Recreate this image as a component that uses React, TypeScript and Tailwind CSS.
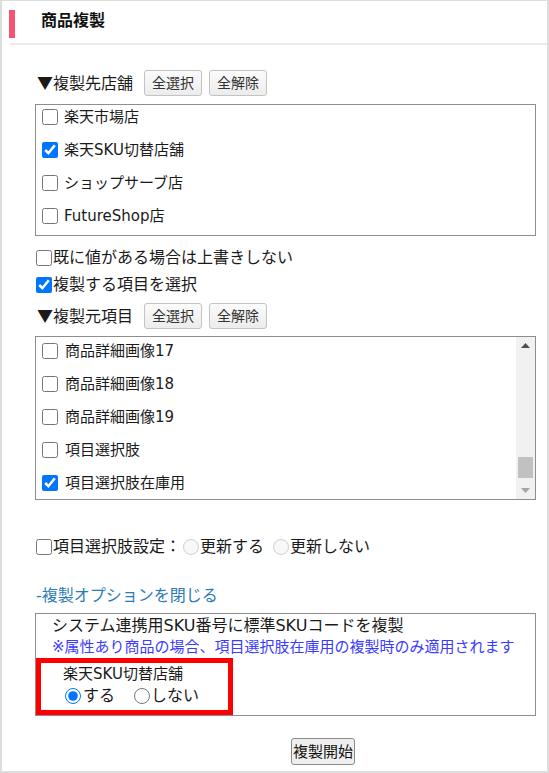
import React from "react";

function SmallButton({ label }: { label: string }) {
  return (
    <button
      type="button"
      className="w-[58px] h-[26px] flex items-center justify-center rounded-[3px] border border-[#c3c3c3] bg-gradient-to-b from-[#fbfbfb] to-[#ececec] text-[14px] leading-[20px] text-[#333]"
    >
      {label}
    </button>
  );
}

function ListRow({ label, checked, gap }: { label: string; checked?: boolean; gap: "a" | "b" }) {
  return (
    <div className={gap === "a" ? "h-[24px] flex items-center gap-[6px]" : "h-[24px] flex items-center gap-[7px]"}>
      <input type="checkbox" defaultChecked={checked} className="w-4 h-4 m-0 shrink-0" />
      <span className="text-[15px] leading-[24px] text-[#1a1a1a]">{label}</span>
    </div>
  );
}

export default function App() {
  return (
    <div className="w-[549px] h-[773px] bg-white border-t border-l-2 border-r-2 border-b-2 border-[#dddddd] font-['DejaVu_Sans','Noto_Sans_CJK_JP',sans-serif] text-[#1a1a1a] overflow-hidden">
      {/* header */}
      <div className="pt-[9px] pl-[7px] flex items-start">
        <div className="w-[6px] h-[28px] bg-[#f5536f]" />
        <div className="ml-[26px] text-[16px] font-bold leading-[22px] text-[#111]">商品複製</div>
      </div>
      <div className="mt-[5px] ml-[8px] h-[2px] bg-[#ebebeb]" />

      <div className="pl-[33px] pr-[11px]">
        {/* 複製先店舗 */}
        <div className="mt-[25px] h-[26px] flex items-center">
          <span className="ml-[2px] text-[16px] leading-[26px]">
            <span className="font-['Noto_Sans_CJK_JP',sans-serif]">▼</span>複製先店舗
          </span>
          <div className="ml-[11px] flex gap-[7px]">
            <SmallButton label="全選択" />
            <SmallButton label="全解除" />
          </div>
        </div>
        <div className="mt-[8px] h-[132px] border border-[#8e8e8e] pl-[6px] flex flex-col gap-[9px]">
          <ListRow gap="a" label="楽天市場店" />
          <ListRow gap="a" label="楽天SKU切替店舗" checked />
          <ListRow gap="a" label="ショップサーブ店" />
          <ListRow gap="a" label="FutureShop店" />
        </div>

        {/* checkboxes */}
        <div className="mt-[8px] h-[27px] flex items-center">
          <input type="checkbox" className="ml-[1px] w-4 h-4 m-0 shrink-0" />
          <span className="ml-[1px] text-[16px] leading-[27px]">既に値がある場合は上書きしない</span>
        </div>
        <div className="h-[27px] flex items-center">
          <input type="checkbox" defaultChecked className="ml-[1px] w-4 h-4 m-0 shrink-0" />
          <span className="ml-[1px] text-[16px] leading-[27px]">複製する項目を選択</span>
        </div>

        {/* 複製元項目 */}
        <div className="mt-[5px] h-[26px] flex items-center">
          <span className="ml-[2px] text-[16px] leading-[26px]">
            <span className="font-['Noto_Sans_CJK_JP',sans-serif]">▼</span>複製元項目
          </span>
          <div className="ml-[11px] flex gap-[7px]">
            <SmallButton label="全選択" />
            <SmallButton label="全解除" />
          </div>
        </div>
        <div className="mt-[7px] h-[164px] border border-[#8e8e8e] flex">
          <div className="flex-1 pt-[2px] pl-[6px] flex flex-col gap-[9px] overflow-hidden">
            <ListRow gap="b" label="商品詳細画像17" />
            <ListRow gap="b" label="商品詳細画像18" />
            <ListRow gap="b" label="商品詳細画像19" />
            <ListRow gap="b" label="項目選択肢" />
            <ListRow gap="b" label="項目選択肢在庫用" checked />
          </div>
          <div className="w-[19px] bg-[#f1f1f1] flex flex-col">
            <div className="h-[17px] flex items-center justify-center">
              <svg width="9" height="5" viewBox="0 0 9 5">
                <path d="M0 5 L4.5 0 L9 5 Z" fill="#505050" />
              </svg>
            </div>
            <div className="h-[103px]" />
            <div className="h-[21px] mx-[2px] bg-[#c1c1c1]" />
            <div className="flex-1" />
            <div className="h-[17px] flex items-center justify-center">
              <svg width="9" height="5" viewBox="0 0 9 5">
                <path d="M0 0 L9 0 L4.5 5 Z" fill="#a3a3a3" />
              </svg>
            </div>
          </div>
        </div>

        {/* 項目選択肢設定 */}
        <div className="mt-[33px] h-[27px] flex items-center">
          <input type="checkbox" className="ml-[1px] w-4 h-4 m-0 shrink-0" />
          <span className="ml-[1px] text-[16px] leading-[27px]">項目選択肢設定：</span>
          <input type="radio" name="upd" disabled className="ml-[2px] w-4 h-4 m-0 shrink-0" />
          <span className="ml-[1px] text-[16px] leading-[27px]">更新する</span>
          <input type="radio" name="upd" disabled className="ml-[9px] w-4 h-4 m-0 shrink-0" />
          <span className="ml-[1px] text-[16px] leading-[27px]">更新しない</span>
        </div>

        {/* link */}
        <div className="mt-[24px] ml-[1px] text-[16px] leading-[24px] text-[#2a7ab8]">-複製オプションを閉じる</div>

        {/* options box */}
        <div className="mt-[5px] h-[103px] border border-[#8e8e8e]">
          <div className="pt-[1px] pl-[16px] text-[16px] leading-[22px]">システム連携用SKU番号に標準SKUコードを複製</div>
          <div className="pl-[16px] text-[15px] leading-[20px] text-[#3b3bff]">※属性あり商品の場合、項目選択肢在庫用の複製時のみ適用されます</div>
          <div className="mt-[1px] w-[197px] h-[57px] border-[5px] border-[#ff0000]">
            <div className="h-[22px] pl-[22px] text-[15px] leading-[22px]">楽天SKU切替店舗</div>
            <div className="h-[22px] pl-[24px] flex items-center">
              <input type="radio" name="sku" defaultChecked className="w-4 h-4 m-0 shrink-0" />
              <span className="ml-[2px] text-[16px] leading-[22px]">する</span>
              <input type="radio" name="sku" className="ml-[19px] w-4 h-4 m-0 shrink-0" />
              <span className="ml-[1px] text-[16px] leading-[22px]">しない</span>
            </div>
          </div>
        </div>

        {/* start button */}
        <button
          type="button"
          className="mt-[22px] ml-[256px] w-[64px] h-[27px] flex items-center justify-center rounded-[3px] border border-[#8a8a8a] bg-[#efefef] text-[15px] leading-[20px] text-[#111]"
        >
          複製開始
        </button>
      </div>
    </div>
  );
}
